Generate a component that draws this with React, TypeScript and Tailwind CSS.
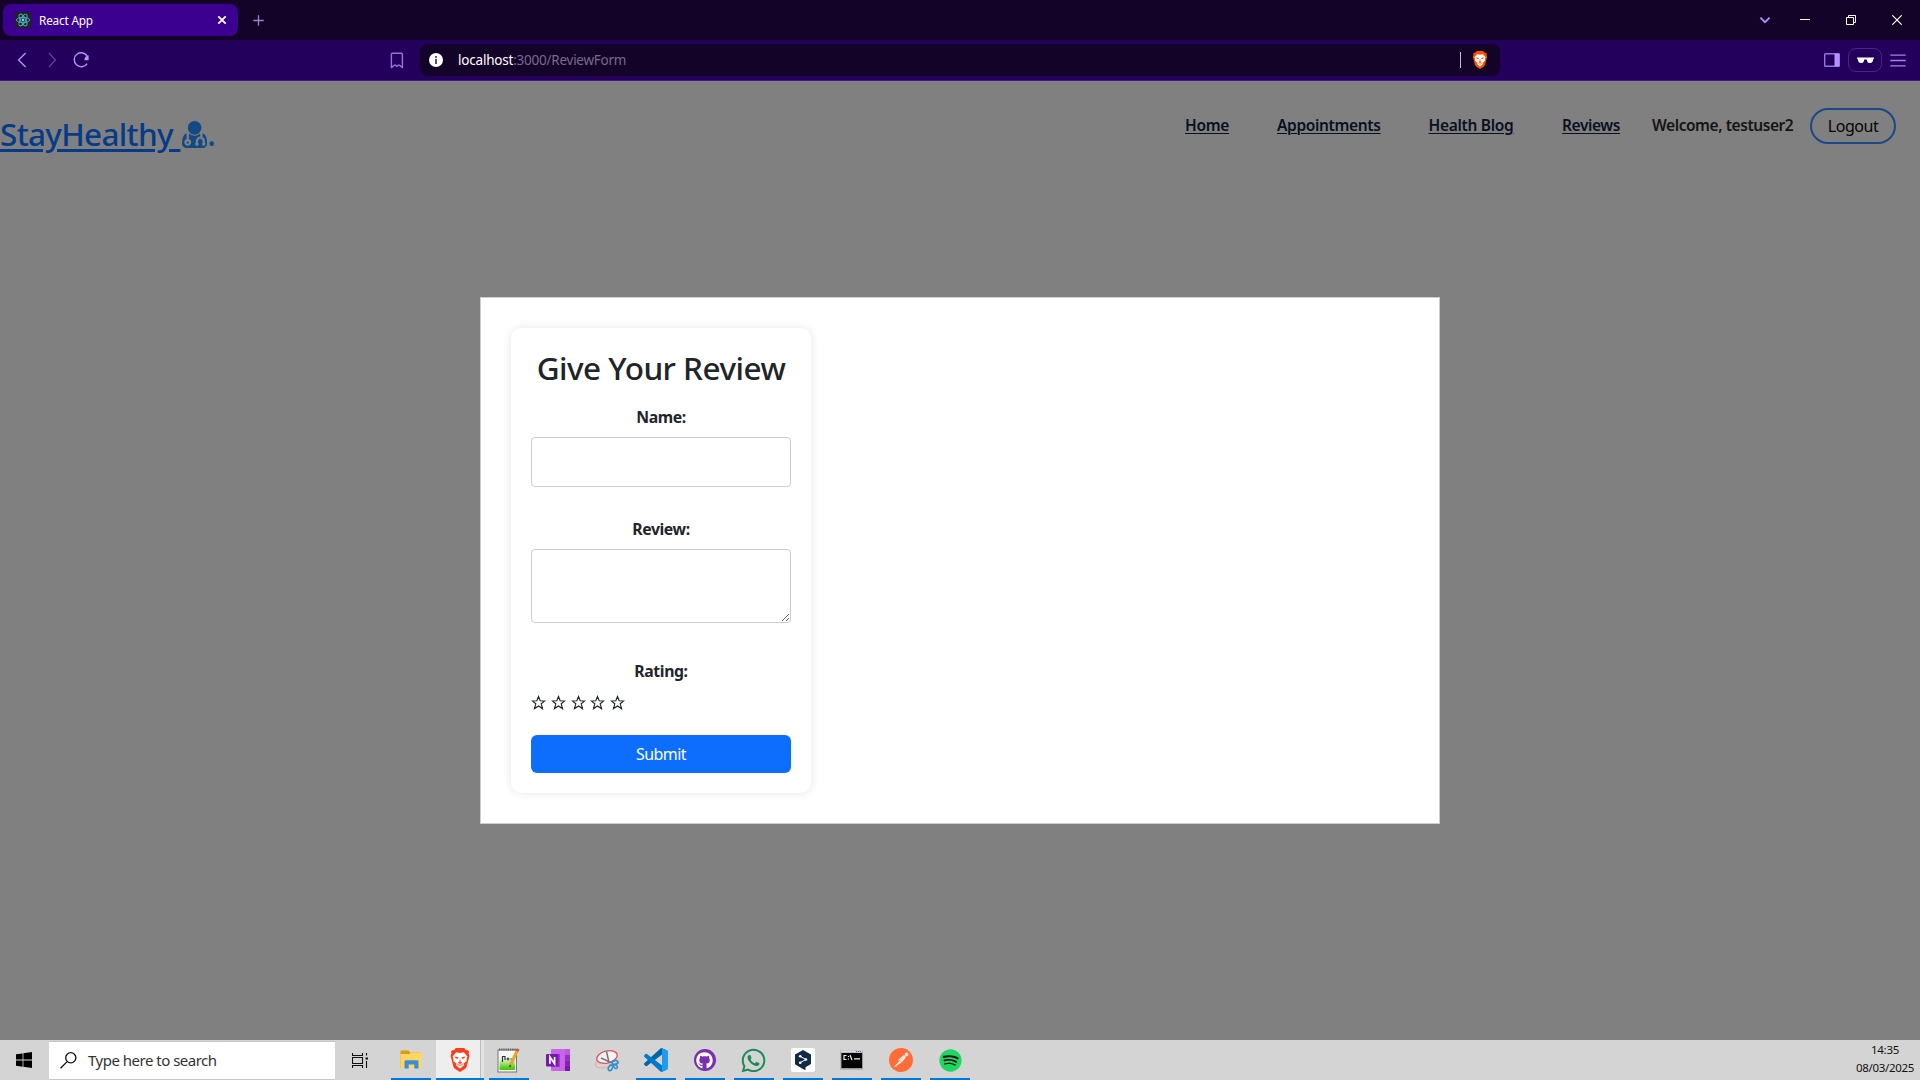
import React from "react";
import { FaGithub, FaSpotify, FaWhatsapp } from "react-icons/fa";
import { SiPostman } from "react-icons/si";

function ReactFavicon() {
  return (
    <svg width="16" height="16" viewBox="0 0 16 16" className="shrink-0">
      <rect width="16" height="16" rx="1.5" fill="#222222" />
      <g fill="none" stroke="#4fb3c8" strokeWidth="0.9">
        <ellipse cx="8" cy="8" rx="6.6" ry="2.6" />
        <ellipse cx="8" cy="8" rx="6.6" ry="2.6" transform="rotate(60 8 8)" />
        <ellipse cx="8" cy="8" rx="6.6" ry="2.6" transform="rotate(120 8 8)" />
      </g>
      <circle cx="8" cy="8" r="1.4" fill="#61dafb" />
    </svg>
  );
}

function BraveIcon({ size }: { size: "small" | "large" }) {
  const color = size === "small" ? "#ff5000" : "#fb3f1a";
  return (
    <svg viewBox="0 0 20 24" className={size === "small" ? "h-[18px] w-4" : "h-6 w-5"}>
      <path d="M5.800 0h8.400l1.900 2.200c1.200-.3 2.200.3 3 1.500l-.5 1.500.9 2.500-2.700 10.200c-.4 1.300-1 2.200-2.100 3L10 24l-4.700-3.100c-1.100-.8-1.700-1.700-2.100-3L.5 7.700l.9-2.500L.9 3.700c.8-1.200 1.800-1.800 3-1.500z" fill={color} />
      <path d="M6.300 4.200l3.700.7 3.700-.7 3.700 4.200-.9 2.500.2 2.200-3 2.300.3 1.800L10 20.500 6 17.200l.3-1.800-3-2.300.2-2.200-.9-2.500z" fill="#fff" />
      <path d="M4.400 8.400l4 .8-.3 1.500-2.300-.3zM15.600 8.400l-4 .8.300 1.500 2.300-.3zM10 9.500l.6 4.300 1.600 1-2.200 1.300-2.200-1.300 1.600-1z" fill={color} />
      <path d="M6.600 15.700l3.400 2 3.400-2" fill="none" stroke={color} strokeWidth="0.800" />
    </svg>
  );
}

function TabStrip() {
  return (
    <div className="flex h-10 items-center bg-[#140329] pl-[3px]">
      <div className="flex h-8 w-[235px] items-center rounded-lg bg-[#3b008f] pl-3 pr-[11px]">
        <ReactFavicon />
        <span className="ml-2 flex-1 whitespace-nowrap text-[11.8px] leading-4 tracking-[-0.2px] text-white">React App</span>
        <svg width="10" height="10" viewBox="0 0 10 10" fill="none" stroke="#fff" strokeWidth="1.8">
          <path d="M1.3 1.3l7.4 7.4M8.7 1.3L1.3 8.7" />
        </svg>
      </div>
      <svg width="11" height="11" viewBox="0 0 11 11" className="ml-[15px]" fill="none" stroke="#9a83c4" strokeWidth="1.3">
        <path d="M5.5 0.3v10.4M0.3 5.5h10.4" />
      </svg>
      <div className="ml-auto flex items-center pr-[18px]">
        <svg width="12" height="8" viewBox="0 0 12 8" fill="none" stroke="#b393ff" strokeWidth="1.7" className="mr-[29px]">
          <path d="M1.4 1.6L6 6.2l4.6-4.6" />
        </svg>
        <svg width="10" height="10" className="mr-9" shapeRendering="crispEdges">
          <rect y="4" width="10" height="1" fill="#fff" />
        </svg>
        <svg width="10" height="10" viewBox="0 0 10 10" className="mr-9" fill="none" stroke="#fff">
          <path d="M0.5 2.5h7v7h-7zM2.5 2.5v-2h7v7h-2" />
        </svg>
        <svg width="10" height="10" viewBox="0 0 10 10" fill="none" stroke="#fff" strokeWidth="1.2">
          <path d="M0.3 0.3l9.4 9.4M9.7 0.3L0.3 9.7" />
        </svg>
      </div>
    </div>
  );
}

function Toolbar() {
  return (
    <div className="flex h-[41px] items-center border-b border-[#43197f] bg-[#22005c] pl-[17px] pr-[14px]">
      <svg width="10" height="16" viewBox="0 0 10 16" fill="none" stroke="#b393ff" strokeWidth="1.4">
        <path d="M8.6 1L1.6 8l7 7" />
      </svg>
      <svg width="10" height="16" viewBox="0 0 10 16" fill="none" stroke="#5f3c9e" strokeWidth="1.4" className="ml-5">
        <path d="M1.8 1l6.6 7-6.6 7" />
      </svg>
      <svg width="17" height="16" viewBox="0 0 17 16" fill="none" className="ml-4">
        <path d="M14.6 4.8A7 7 0 1 0 14.1 11.6" stroke="#b393ff" strokeWidth="1.4" />
        <path d="M15.6 3.2v5H11.4c0-2.6 1.4-4.4 4.2-5z" fill="#b393ff" />
      </svg>
      <svg width="14" height="17" viewBox="0 0 14 17" fill="none" stroke="#9673dd" strokeWidth="1.4" strokeLinejoin="round" className="ml-[300px]">
        <path d="M1.4 2.2q0-1 1-1h9q1 0 1 1V15.6L9.600 13.2q-.7-.6-1.4 0L6.900 14.4 5.600 13.2q-.7-.6-1.4 0L1.4 15.6z" />
      </svg>
      <div className="ml-4 flex h-8 w-[1080px] items-center rounded-lg bg-[#140329] pl-[9px] pr-[12px]">
        <svg width="14" height="14" viewBox="0 0 14 14">
          <circle cx="7" cy="7" r="7" fill="#fff" />
          <path d="M6.1 3h1.8v1.7H6.1zM6.1 5.8h1.8V11H6.1z" fill="#4d3d62" />
        </svg>
        <span className="ml-[15px] whitespace-nowrap text-[13.5px] leading-5 tracking-[-0.2px] text-white">localhost</span>
        <span className="whitespace-nowrap text-[13.5px] leading-5 tracking-[-0.25px] text-[#776b8a]">:3000/ReviewForm</span>
        <span className="ml-auto h-4 w-px bg-[#c3bfca]" />
        <span className="ml-[11px] flex">
          <BraveIcon size="small" />
        </span>
      </div>
      <svg width="16" height="14" viewBox="0 0 16 14" className="ml-auto">
        <rect x="0.7" y="0.7" width="14.6" height="12.6" rx="0.8" fill="none" stroke="#9673dd" strokeWidth="1.4" />
        <rect x="10.5" y="0.7" width="4.8" height="12.6" fill="#b393ff" />
      </svg>
      <div className="ml-2 grid h-6 w-[34px] place-items-center rounded-lg border border-[#4a2585]">
        <svg width="17" height="7" viewBox="0 0 17 7" fill="#fff">
          <path d="M0 0.5h17v1.3h-.7C16 4.8 15 6 13 6S10 4.8 9.700 2.4H7.300C7 4.800 6 6 4 6S1 4.800.7 1.800H0z" />
        </svg>
      </div>
      <svg width="16" height="13" viewBox="0 0 16 13" className="ml-2" stroke="#a283ee" strokeWidth="1.3">
        <path d="M0.3 1.2h15.400M0.3 6.500h15.400M0.3 11.800h15.400" />
      </svg>
    </div>
  );
}

function DoctorIcon() {
  return (
    <svg width="25.2" height="27" viewBox="192 128 1408 1512" className="mt-[19px]" fill="#134a86">
      <path d="M576 1344q0 26-19 45t-45 19-45-19-19-45 19-45 45-19 45 19 19 45zm1024 37q0 120-73 189.500t-194 69.500h-874q-121 0-194-69.500t-73-189.500q0-68 5.500-131t24-138 47.500-132.500 81-103 120-60.500q-22 52-22 120v203q-58 20-93 70t-35 111q0 80 56 136t136 56 136-56 56-136q0-61-35.500-111t-92.500-70v-203q0-62 25-93 132 104 295 104t295-104q25 31 25 93v64q-106 0-181 75t-75 181v89q-32 29-32 71 0 40 28 68t68 28 68-28 28-68q0-42-32-71v-89q0-52 38-90t90-38 90 38 38 90v89q-32 29-32 71 0 40 28 68t68 28 68-28 28-68q0-42-32-71v-89q0-68-34.500-127.500t-93.500-93.500q0-10 .5-42.500t0-48-2.500-41.500-7-47-13-40q68 15 120 60.500t81 103 47.500 132.500 24 138 5.500 131zm-320-869q0 159-112.500 271.500t-271.500 112.500-271.500-112.500-112.500-271.500 112.500-271.500 271.500-112.500 271.500 112.500 112.500 271.500z" />
    </svg>
  );
}

const linkBase = "whitespace-nowrap underline decoration-1 underline-offset-2";

function SiteNav() {
  return (
    <nav className="flex h-[120px] items-start pt-[21px] text-[15.5px] font-semibold leading-6 text-[#07111f]">
      <a className="flex h-14 text-[32px] font-medium leading-[48px] text-[#073b88]">
        <span className="mt-2 w-[182px] whitespace-pre text-[31.5px] tracking-[-0.7px] underline decoration-[3px] underline-offset-[3px]">StayHealthy </span>
        <DoctorIcon />
        <span className="mt-2 text-[#134a86]">.</span>
      </a>
      <div className="ml-auto flex pr-6">
        <a className={`${linkBase} mt-[11px] w-[92px] tracking-[-0.3px]`}>Home</a>
        <a className={`${linkBase} mt-[11px] w-[151.5px] tracking-[-0.35px]`}>Appointments</a>
        <a className={`${linkBase} mt-[11px] w-[133.5px] tracking-[-0.3px]`}>Health Blog</a>
        <a className={`${linkBase} mt-[11px] w-[90px] tracking-[-0.42px]`}>Reviews</a>
        <span className="mt-[11px] w-[158px] whitespace-nowrap tracking-[-0.43px] text-[#141414]">Welcome, testuser2</span>
        <button className="mt-[6px] h-9 w-[86px] rounded-[18px] border-2 border-[#1c478b] text-base font-normal leading-[33px] tracking-[-0.45px] text-[#050505]">Logout</button>
      </div>
    </nav>
  );
}

function Star() {
  return (
    <svg width="15" height="15" viewBox="0 0 15 15" fill="none" stroke="#212529" strokeWidth="1.15" strokeLinejoin="miter">
      <path d="M7.500 1.500L9.200 5.700 13.700 5.900 10.200 8.800 11.500 13.600 7.500 10.900 3.500 13.600 4.800 8.800 1.300 5.900 5.800 5.700z" />
    </svg>
  );
}

function ReviewModal() {
  return (
    <div className="absolute inset-0 grid place-items-center">
      <div className="h-[527px] w-[960px] border border-[#cccccc] bg-white p-[30px]">
        <form className="flex h-[465px] w-[300px] flex-col rounded-[10px] bg-white px-5 pb-5 pt-5 text-center text-[#212529] shadow-[0_0_10px_rgba(0,0,0,0.1)]">
          <h2 className="whitespace-nowrap text-[31.5px] font-medium leading-[40px] tracking-[-0.52px]">Give Your Review</h2>
          <label className="mt-[17px] text-[15.8px] font-bold leading-[25px] tracking-[-0.4px]">Name:</label>
          <input className="mt-[7px] h-[50px] rounded border border-[#cccccc]" />
          <label className="mt-[30px] text-[15.8px] font-bold leading-[25px] tracking-[-0.4px]">Review:</label>
          <textarea className="mt-[7px] h-[74px] min-h-[74px] rounded border border-[#cccccc]" />
          <label className="mt-9 text-[15.8px] font-bold leading-[25px] tracking-[-0.4px]">Rating:</label>
          <div className="mt-[11px] flex h-[15px] gap-[4.8px]">
            <Star /><Star /><Star /><Star /><Star />
          </div>
          <button type="button" className="mt-[25px] h-[38px] rounded-md bg-[#0d6efd] text-base leading-6 tracking-[-0.55px] text-white">Submit</button>
        </form>
      </div>
    </div>
  );
}

function ExplorerIcon() {
  return (
    <svg width="22" height="20" viewBox="0 0 22 20">
      <path d="M0.500 1.500q0-1 1-1h7l1.500 2h11v15.500h-20.500z" fill="#d99b12" />
      <path d="M0.500 4h9l1.500-1.500h10.700V18H0.500z" fill="#ffd563" />
      <path d="M4.500 18.500v-7q0-1.200 1.200-1.200h11.600q1.200 0 1.200 1.200v7h-4.200v-4h-5.600v4z" fill="#3b8fd6" />
    </svg>
  );
}

function NotepadIcon() {
  return (
    <svg width="23" height="25" viewBox="0 0 23 25">
      <defs>
        <linearGradient id="notepad-green" x1="0" y1="0" x2="0" y2="1">
          <stop offset="0.300" stopColor="#f4f9ee" />
          <stop offset="0.900" stopColor="#4ecb0a" />
        </linearGradient>
      </defs>
      <rect x="1" y="2" width="18.500" height="22" fill="#f6f6f6" stroke="#777" />
      <rect x="2.500" y="5" width="15.500" height="17" fill="url(#notepad-green)" />
      <path d="M2 1.500h17" stroke="#555" strokeWidth="2" strokeDasharray="1.200 1" />
      <path d="M5.500 14V8.500h2.500V12M9.500 11h3M11 9.500v3M13.500 11h3" fill="none" stroke="#333" strokeWidth="1.200" />
      <path d="M20 3L13.500 17" stroke="#e8a52a" strokeWidth="3" />
      <path d="M21.200 0.800L20 3.200" stroke="#d0503a" strokeWidth="3" />
      <path d="M13.500 17l-.8 2" stroke="#333" strokeWidth="1.400" />
    </svg>
  );
}

function OneNoteIcon() {
  return (
    <svg width="24" height="22" viewBox="0 0 24 22">
      <rect x="5" width="19" height="22" rx="1" fill="#ca64ea" />
      <rect x="19" y="0" width="5" height="6" fill="#b95ae0" />
      <rect x="19" y="6" width="5" height="5.500" fill="#9332bf" />
      <rect x="19" y="11.500" width="5" height="5" fill="#8522b0" />
      <rect x="19" y="16.500" width="5" height="5.500" fill="#7719aa" />
      <rect x="5" y="5" width="9" height="13" fill="#a23fc9" />
      <rect y="5" width="12.500" height="12.500" rx="1" fill="#7719aa" />
      <path d="M3.900 14.700V7.900L8.600 14.700V7.900" fill="none" stroke="#fff" strokeWidth="1.700" />
    </svg>
  );
}

function SnippingIcon() {
  return (
    <svg width="25" height="23" viewBox="0 0 25 23" fill="none">
      <ellipse cx="12" cy="13.500" rx="11" ry="5" transform="rotate(-14 12 13.500)" stroke="#e9a8a8" strokeWidth="1" />
      <ellipse cx="13" cy="8" rx="10.500" ry="6" transform="rotate(-14 13 8)" fill="#f2f2f2" stroke="#e05252" strokeWidth="1.300" />
      <path d="M12.500 2.500L15 13.500M7 9l10 4.500" stroke="#777" strokeWidth="1.500" />
      <ellipse cx="21" cy="13.500" rx="3" ry="1.900" transform="rotate(-10 21 13.500)" stroke="#2f8fd0" strokeWidth="1.700" />
      <ellipse cx="16.500" cy="18.800" rx="1.900" ry="3" transform="rotate(25 16.500 18.800)" stroke="#2f8fd0" strokeWidth="1.700" />
      <ellipse cx="21.500" cy="17.500" rx="1.500" ry="2.200" transform="rotate(-35 21.500 17.500)" stroke="#2f8fd0" strokeWidth="1.500" />
    </svg>
  );
}

function CodeIcon() {
  return (
    <svg width="24" height="24" viewBox="0 0 100 100">
      <path d="M96.500 10.800L75.900.9c-2.400-1.200-5.200-.7-7.100 1.200L1.300 63.500c-1.800 1.700-1.800 4.500 0 6.200l5.500 5c1.500 1.400 3.700 1.500 5.300.2L93.400 13.400c2.700-2.100 6.600-.1 6.600 3.300v-.2c0-2.400-1.400-4.600-3.500-5.700z" fill="#0065a9" />
      <path d="M96.500 89.200l-20.600 9.900c-2.400 1.200-5.200.7-7.100-1.200L1.300 36.500c-1.800-1.700-1.800-4.500 0-6.200l5.500-5c1.500-1.400 3.700-1.500 5.300-.2l81.300 61.500c2.700 2.100 6.600.1 6.600-3.300v.2c0 2.400-1.400 4.600-3.500 5.700z" fill="#007acc" />
      <path d="M75.900 99.100c-2.400 1.200-5.200.7-7.100-1.200 2.300 2.300 6.200.7 6.200-2.600V4.700c0-3.300-3.900-4.900-6.200-2.600 1.900-1.900 4.700-2.400 7.100-1.200l20.600 9.900c2.100 1 3.500 3.200 3.500 5.700v67c0 2.400-1.400 4.600-3.500 5.700z" fill="#1f9cf0" />
    </svg>
  );
}

function DeepLIcon() {
  return (
    <svg width="24" height="24" viewBox="0 0 24 24">
      <rect width="24" height="24" rx="2" fill="#fff" />
      <path d="M12 2L20 6.500v9.600L14.500 19.300v3L11 20.500 4 16.200V6.500z" fill="#0f2b46" />
      <path d="M9 8.300l6 3.200-6 3.200" fill="none" stroke="#fff" strokeWidth="1" />
      <circle cx="9.200" cy="8.300" r="1.300" fill="#fff" />
      <circle cx="15" cy="11.500" r="1.300" fill="#fff" />
      <circle cx="9.200" cy="14.700" r="1.300" fill="#fff" />
    </svg>
  );
}

function TerminalIcon() {
  return (
    <svg width="24" height="20" viewBox="0 0 24 20">
      <rect x="0.500" y="0.500" width="22.500" height="19" fill="#9a9a9a" />
      <rect x="1" y="0.500" width="21.500" height="2" fill="#d9dde2" />
      <path d="M16 1.500h5" stroke="#4476ad" strokeDasharray="1.200 0.800" />
      <rect x="1.500" y="3" width="20.500" height="15" fill="#050505" />
      <path d="M6.500 5.500H4v4h2.500M8.500 6v1M8.500 8.500v1M10 5l2 5M14 8.800h6" fill="none" stroke="#eee" strokeWidth="1.200" />
    </svg>
  );
}

type Task = { name: string; icon: React.ReactNode; state: "open" | "active" | "pinned" };

const tasks: Task[] = [
  { name: "File Explorer", icon: <ExplorerIcon />, state: "open" },
  { name: "Brave", icon: <BraveIcon size="large" />, state: "active" },
  { name: "Notepad++", icon: <NotepadIcon />, state: "open" },
  { name: "OneNote", icon: <OneNoteIcon />, state: "pinned" },
  { name: "Snipping Tool", icon: <SnippingIcon />, state: "pinned" },
  { name: "VS Code", icon: <CodeIcon />, state: "open" },
  {
    name: "GitHub",
    icon: (
      <span className="grid h-[22px] w-[22px] place-items-center rounded-full bg-[#7a2fae]">
        <FaGithub size={17} color="#fff" />
      </span>
    ),
    state: "open",
  },
  { name: "WhatsApp", icon: <FaWhatsapp size={27} color="#1c8a55" />, state: "open" },
  { name: "DeepL", icon: <DeepLIcon />, state: "open" },
  { name: "Command Prompt", icon: <TerminalIcon />, state: "open" },
  {
    name: "Postman",
    icon: (
      <span className="grid h-6 w-6 place-items-center">
        <span className="col-start-1 row-start-1 h-5 w-5 rounded-full bg-white" />
        <SiPostman size={24} color="#ff6c37" className="col-start-1 row-start-1" />
      </span>
    ),
    state: "open",
  },
  {
    name: "Spotify",
    icon: (
      <span className="grid h-[22px] w-[22px] place-items-center">
        <span className="col-start-1 row-start-1 h-[19px] w-[19px] rounded-full bg-[#111]" />
        <FaSpotify size={23} color="#1ed760" className="col-start-1 row-start-1" />
      </span>
    ),
    state: "open",
  },
];

function TaskButton({ task }: { task: Task }) {
  if (task.state === "active") {
    return (
      <div className="flex h-10 w-[49px]">
        <div className="flex w-[45px] flex-col items-center border-r border-[#bdbdbd] bg-[#eeeeee]">
          <span className="grid flex-1 place-items-center pl-1 pt-0.5">{task.icon}</span>
          <span className="h-0.5 w-[45px] shrink-0 bg-[#0078d7]" />
        </div>
        <div className="flex w-[3px] flex-col justify-end bg-[#e2e2e2]">
          <span className="h-0.5 bg-[#0078d7]" />
        </div>
      </div>
    );
  }
  return (
    <div className="flex h-10 w-[49px] flex-col items-center pr-px">
      <span className="grid flex-1 place-items-center pr-px pt-0.5">{task.icon}</span>
      <span className={task.state === "open" ? "h-0.5 w-10 bg-[#0078d7]" : "h-0.5 w-10"} />
    </div>
  );
}

function Taskbar() {
  return (
    <footer className="flex h-10 bg-[#d4d4d4]">
      <div className="grid w-12 place-items-center">
        <svg width="16" height="16" viewBox="0 0 16 16" fill="#000">
          <path d="M0 2.300L6.600 1.400V7.600H0zM7.400 1.200L16 0V7.600H7.400zM0 8.400H6.600V14.700L0 13.700zM7.400 8.400H16V16L7.400 14.800z" />
        </svg>
      </div>
      <div className="ml-px flex h-[39px] w-[286px] items-center self-end border-y border-[#c6c6c6] bg-white pb-px pl-[11px]">
        <svg width="17" height="17" viewBox="0 0 17 17" fill="none" stroke="#111" strokeWidth="1.300">
          <circle cx="10.800" cy="5.800" r="5.100" />
          <path d="M7.100 9.600L0.500 16.200" />
        </svg>
        <span className="ml-[11px] whitespace-nowrap text-[15px] leading-6 tracking-[-0.5px] text-[#333]">Type here to search</span>
      </div>
      <div className="grid w-[52px] place-items-center pr-px">
        <svg width="17" height="15" viewBox="0 0 17 15" fill="none" stroke="#111" strokeWidth="1.100">
          <path d="M0.500 0v2.500h10V0M0.500 15v-2.500h10V15M0.500 4.500h10v6h-10zM14.500 0v2.500M14.500 8v7" />
          <rect x="13.500" y="4.500" width="2.500" height="2" fill="#111" stroke="none" />
        </svg>
      </div>
      {tasks.map((task) => (
        <TaskButton key={task.name} task={task} />
      ))}
      <div className="ml-auto w-[70px] pt-px text-center text-[11.500px] leading-[18px] tracking-[-0.300px] text-[#111]">
        <div>14:35</div>
        <div>08/03/2025</div>
      </div>
    </footer>
  );
}

export default function App() {
  return (
    <div className="flex h-[1080px] w-[1920px] flex-col overflow-hidden font-['Noto_Sans',sans-serif]">
      <TabStrip />
      <Toolbar />
      <main className="relative flex-1 bg-[#808080]">
        <SiteNav />
        <ReviewModal />
      </main>
      <Taskbar />
    </div>
  );
}
